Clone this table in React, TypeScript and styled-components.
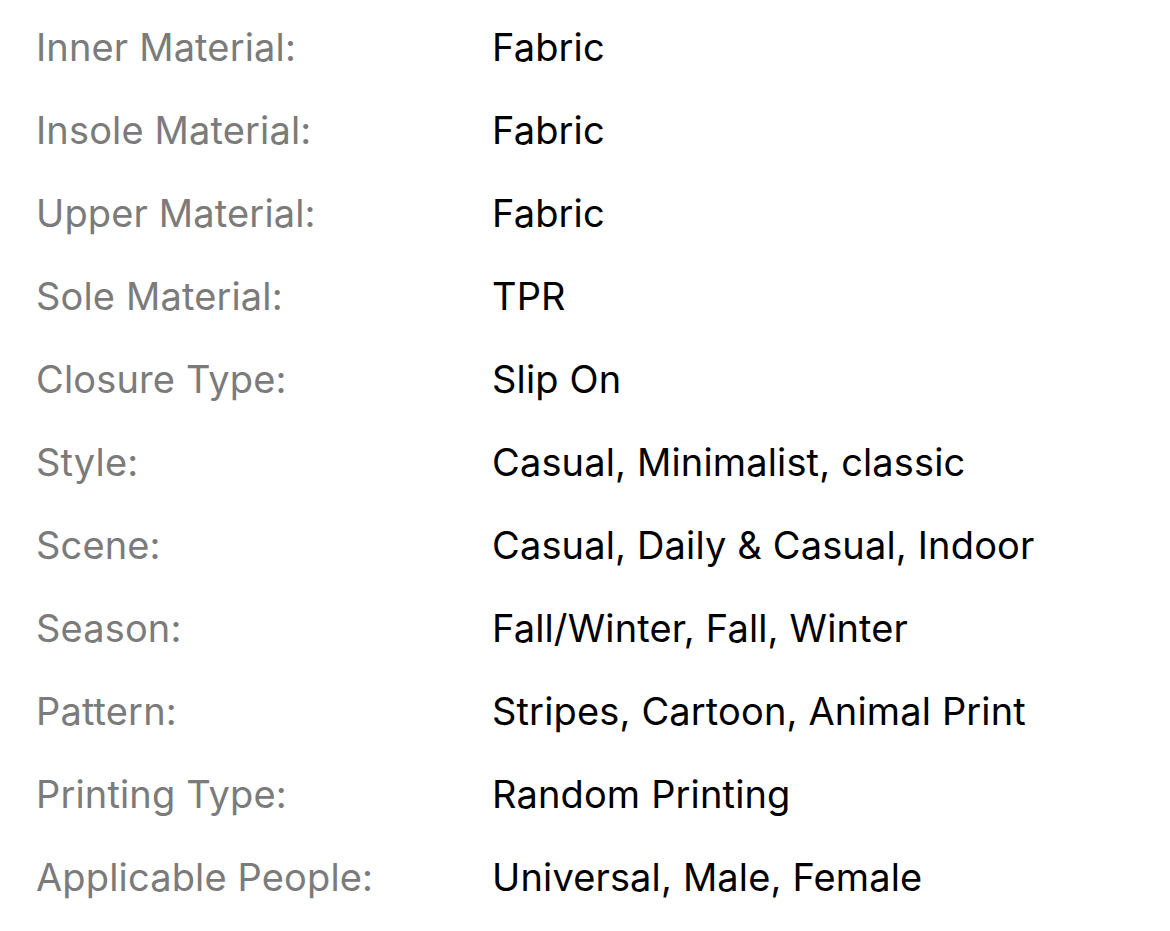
import React from "react";
import styled, { createGlobalStyle } from "styled-components";

const GlobalStyle = createGlobalStyle`
  body {
    margin: 0;
    background: #ffffff;
    font-family: Inter, "Noto Sans", "Liberation Sans", sans-serif;
  }
`;

const specs: [string, string][] = [
  ["Inner Material:", "Fabric"],
  ["Insole Material:", "Fabric"],
  ["Upper Material:", "Fabric"],
  ["Sole Material:", "TPR"],
  ["Closure Type:", "Slip On"],
  ["Style:", "Casual, Minimalist, classic"],
  ["Scene:", "Casual, Daily & Casual, Indoor"],
  ["Season:", "Fall/Winter, Fall, Winter"],
  ["Pattern:", "Stripes, Cartoon, Animal Print"],
  ["Printing Type:", "Random Printing"],
  ["Applicable People:", "Universal, Male, Female"],
];

const App = () => {
  return (
    <>
      <GlobalStyle />
      <SpecList>
        {specs.map(([label, value]) => (
          <SpecRow key={label}>
            <Label>{label}</Label>
            <Value>{value}</Value>
          </SpecRow>
        ))}
      </SpecList>
    </>
  );
};

const SpecList = styled.dl`
  margin: 0;
  padding: 5px 0 0 36px;
  display: flex;
  flex-direction: column;
`;

const SpecRow = styled.div`
  display: grid;
  grid-template-columns: 456px 1fr;
  height: 83px;
  align-items: center;
  font-size: 38px;
  letter-spacing: 0.15px;
`;

const Label = styled.dt`
  color: #7b7b7b;
`;

const Value = styled.dd`
  margin: 0;
  color: #000000;
`;

export default App;
